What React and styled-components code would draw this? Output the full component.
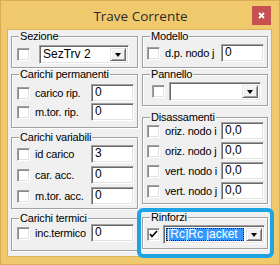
import styled, { createGlobalStyle } from "styled-components";

const GlobalStyle = createGlobalStyle`
  html, body {
    margin: 0;
    padding: 0;
    background: #ffffff;
  }
  * {
    box-sizing: border-box;
  }
`;

const Window = styled.div`
  position: relative;
  width: 280px;
  height: 265px;
  display: flex;
  flex-direction: column;
  padding: 0 7px 7px 6px;
  background: #f1c96d;
  border: 1px solid #d9ad52;
  font-family: "Liberation Sans", Arial, sans-serif;
  font-size: 11px;
  color: #000;
`;

const TitleBar = styled.div`
  height: 28px;
  flex: none;
  display: grid;
  grid-template-columns: 1fr auto 1fr;
  align-items: start;
  padding: 0 1px 0 3px;
`;

const Title = styled.div`
  grid-column: 2;
  padding-top: 6px;
  font-family: "Open Sans", "Noto Sans", sans-serif;
  font-size: 13.5px;
  line-height: 18px;
  color: #2b2b2b;
`;

const CloseButton = styled.div`
  grid-column: 3;
  justify-self: end;
  margin-top: 5px;
  width: 19px;
  height: 19px;
  display: flex;
  align-items: center;
  justify-content: center;
  background: #c75050;
`;

const Client = styled.div`
  flex: 1;
  display: grid;
  grid-template-columns: 127px 126px;
  column-gap: 4px;
  padding: 0 3px;
  background: #f0f0f0;
  border: 1px solid #dbb25c;
`;

const Column = styled.div`
  display: flex;
  flex-direction: column;
`;

const Group = styled.fieldset`
  margin: ${(p) => p.$top}px 0 0 0;
  height: ${(p) => p.$h}px;
  min-width: 0;
  padding: 0;
  border: 1px solid #a0a0a0;
  box-shadow: inset 1px 1px 0 #ffffff, 1px 1px 0 #ffffff;
`;

const Legend = styled.legend`
  margin-left: 7px;
  padding: 0 1px;
  line-height: 11px;
  background: #f0f0f0;
  letter-spacing: -0.2px;
`;

const Body = styled.div`
  display: flex;
  flex-direction: column;
  gap: ${(p) => p.$gap || 0}px;
  margin-top: ${(p) => p.$pt}px;
`;

const Row = styled.div`
  display: flex;
  align-items: center;
  height: ${(p) => p.$h || 18}px;
  padding-left: ${(p) => p.$indent}px;
`;

const Check = styled.span`
  width: 13px;
  height: 13px;
  flex: none;
  display: flex;
  align-items: center;
  justify-content: center;
  background: #ffffff;
  border: 1px solid;
  border-color: #a0a0a0 #ffffff #ffffff #a0a0a0;
  box-shadow: inset 1px 1px 0 #8a8a8a, inset -1px -1px 0 #e3e3e3;
`;

const Label = styled.span`
  margin-left: 5px;
  white-space: nowrap;
  letter-spacing: -0.2px;
`;

const Field = styled.div`
  width: 43px;
  height: 18px;
  margin-left: auto;
  margin-right: 3px;
  padding-left: 3px;
  background: #ffffff;
  border: 1px solid;
  border-color: #a0a0a0 #ffffff #ffffff #a0a0a0;
  box-shadow: inset 1px 1px 0 #696969, inset -1px -1px 0 #e3e3e3;
  line-height: 15px;
  font-size: 12px;
`;

const Combo = styled.div`
  width: ${(p) => p.$w}px;
  height: 19px;
  margin-left: ${(p) => p.$gap}px;
  display: flex;
  align-items: stretch;
  padding: 2px;
  background: #ffffff;
  border: 1px solid;
  border-color: #a0a0a0 #ffffff #ffffff #a0a0a0;
  box-shadow: inset 1px 1px 0 #696969, inset -1px -1px 0 #e3e3e3;
`;

const ComboText = styled.div`
  flex: 1;
  min-width: 0;
  overflow: hidden;
  white-space: nowrap;
  padding-left: 1px;
  line-height: 13px;
  font-size: 12px;
  color: ${(p) => (p.$selected ? "#ffffff" : "#000000")};
  background: ${(p) => (p.$selected ? "#3399ff" : "transparent")};
  outline: ${(p) => (p.$selected ? "1px dotted #1a1a1a" : "none")};
  outline-offset: -1px;
  margin-right: ${(p) => (p.$selected ? 2 : 0)}px;
`;

const DropButton = styled.div`
  width: 16px;
  flex: none;
  display: flex;
  align-items: center;
  justify-content: center;
  background: #f0f0f0;
  border: 1px solid;
  border-color: #e3e3e3 #696969 #696969 #e3e3e3;
  box-shadow: inset 1px 1px 0 #ffffff, inset -1px -1px 0 #a0a0a0;
`;

const Arrow = styled.span`
  width: 0;
  height: 0;
  border-left: 3.5px solid transparent;
  border-right: 3.5px solid transparent;
  border-top: 4px solid #000;
`;

const Highlight = styled.div`
  position: absolute;
  left: 136px;
  top: 207px;
  width: 137px;
  height: 50px;
  border: 4px solid #1ea3e4;
  border-radius: 6px;
  pointer-events: none;
`;

const CheckBox = ({ checked }) => (
  <Check>
    {checked && (
      <svg width="9" height="9" viewBox="0 0 9 9">
        <polyline points="1,4 3,6.5 8,1" fill="none" stroke="#000" strokeWidth="1.6" />
      </svg>
    )}
  </Check>
);

const FieldRow = ({ label, value, indent }) => (
  <Row $indent={indent}>
    <CheckBox />
    <Label>{label}</Label>
    <Field>{value}</Field>
  </Row>
);

const ComboRow = ({ indent, gap, width, text, selected, checked }) => (
  <Row $indent={indent} $h={19}>
    <CheckBox checked={checked} />
    <Combo $w={width} $gap={gap}>
      <ComboText $selected={selected}>{text}</ComboText>
      <DropButton>
        <Arrow />
      </DropButton>
    </Combo>
  </Row>
);

export default function App() {
  return (
    <>
      <GlobalStyle />
      <Window>
        <TitleBar>
          <Title>Trave Corrente</Title>
          <CloseButton>
            <svg width="7" height="7" viewBox="0 0 7 7">
              <path d="M1 1 L6 6 M6 1 L1 6" stroke="#fff" strokeWidth="1.8" />
            </svg>
          </CloseButton>
        </TitleBar>
        <Client>
          <Column>
            <Group $top={1} $h={37}>
              <Legend>Sezione</Legend>
              <Body $pt={3}>
                <ComboRow indent={5} gap={9} width={90} text="SezTrv 2" />
              </Body>
            </Group>
            <Group $top={1} $h={59}>
              <Legend>Carichi permanenti</Legend>
              <Body $pt={4} $gap={1}>
                <FieldRow indent={5} label="carico rip." value="0" />
                <FieldRow indent={5} label="m.tor. rip." value="0" />
              </Body>
            </Group>
            <Group $top={4} $h={77}>
              <Legend>Carichi variabili</Legend>
              <Body $pt={2} $gap={3}>
                <FieldRow indent={5} label="id carico" value="3" />
                <FieldRow indent={5} label="car. acc." value="0" />
                <FieldRow indent={5} label="m.tor. acc." value="0" />
              </Body>
            </Group>
            <Group $top={4} $h={38}>
              <Legend>Carichi termici</Legend>
              <Body $pt={0}>
                <FieldRow indent={5} label="inc.termico" value="0" />
              </Body>
            </Group>
          </Column>
          <Column>
            <Group $top={1} $h={37}>
              <Legend>Modello</Legend>
              <Body $pt={2}>
                <FieldRow indent={4} label="d.p. nodo j" value="0" />
              </Body>
            </Group>
            <Group $top={1} $h={37}>
              <Legend>Pannello</Legend>
              <Body $pt={2}>
                <ComboRow indent={9} gap={4} width={92} text="" />
              </Body>
            </Group>
            <Group $top={6} $h={92}>
              <Legend>Disassamenti</Legend>
              <Body $pt={-1} $gap={2}>
                <FieldRow indent={4} label="oriz. nodo i" value="0,0" />
                <FieldRow indent={4} label="oriz. nodo j" value="0,0" />
                <FieldRow indent={4} label="vert. nodo i" value="0,0" />
                <FieldRow indent={4} label="vert. nodo j" value="0,0" />
              </Body>
            </Group>
            <Group $top={8} $h={37}>
              <Legend>Rinforzi</Legend>
              <Body $pt={2}>
                <ComboRow
                  indent={4}
                  gap={3}
                  width={102}
                  text="[Rc]Rc jacket"
                  selected
                  checked
                />
              </Body>
            </Group>
          </Column>
        </Client>
        <Highlight />
      </Window>
    </>
  );
}
